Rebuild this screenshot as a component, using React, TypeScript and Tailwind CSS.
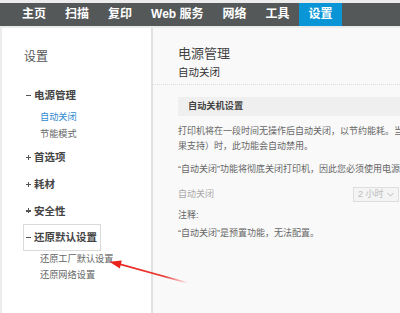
import React from 'react';

const navItems = ['主页', '扫描', '复印', 'Web 服务', '网络', '工具', '设置'];

const groups = [
  { label: '电源管理', open: true, subs: ['自动关闭', '节能模式'] },
  { label: '首选项', open: false, subs: [] },
  { label: '耗材', open: false, subs: [] },
  { label: '安全性', open: false, subs: [] },
  { label: '还原默认设置', open: true, focused: true, subs: ['还原工厂默认设置', '还原网络设置'] },
];

const Sign = ({ open }: { open: boolean }) => (
  <span className="relative inline-block w-[9px] h-[10px]">
    <span className="absolute left-[1px] top-[4.5px] w-[5px] h-[1.3px] bg-[#555]" />
    {!open && <span className="absolute left-[3px] top-[2.5px] w-[1.3px] h-[5px] bg-[#555]" />}
  </span>
);

const App = () => {
  return (
    <div className="relative w-[400px] h-[313px] overflow-hidden bg-[#ececec] font-['Liberation_Sans','Noto_Sans_CJK_SC',sans-serif]">
      <div className="w-[560px]">
        {/* top nav */}
        <div className="mt-[3px] h-[23px] bg-[#545859] flex pl-[12.5px]">
          {navItems.map((item) => (
            <div
              key={item}
              className={`px-[9.5px] h-[23px] leading-[23px] text-[12px] font-bold text-white whitespace-nowrap ${item === '设置' ? 'bg-[#0a96d6]' : ''}`}
            >
              {item}
            </div>
          ))}
        </div>

        <div className="flex h-[287px] pt-[2px]">
          {/* left menu */}
          <div className="ml-[2px] w-[151px] bg-white border-r-[2px] border-[#e1e1e1] pl-[21px] pt-[19.7px]">
            <div className="h-[18px] leading-[18px] text-[12px] text-[#555] pl-[1px]">设置</div>
            <div className="mt-[16.6px]">
              {groups.map((g) => (
                <div key={g.label} className={g.open ? 'mb-[2px]' : ''}>
                  <div
                    className={`inline-flex items-center h-[26.67px] pl-[1px] pr-[2.5px] border ${g.focused ? 'border-[#dadada]' : 'border-transparent'}`}
                  >
                    <Sign open={g.open} />
                    <span className="text-[10.5px] font-bold text-[#444] leading-none">{g.label}</span>
                  </div>
                  {g.subs.map((s, i) => (
                    <div
                      key={s}
                      className={`h-[16.6px] leading-[16.6px] pl-[17px] text-[9.2px] whitespace-nowrap ${g.label === '电源管理' && i === 0 ? 'text-[#2f8bcf]' : 'text-[#666]'}`}
                    >
                      {s}
                    </div>
                  ))}
                </div>
              ))}
            </div>
          </div>

          {/* right content */}
          <div className="flex-1 bg-[#f9f9f9]">
            <div className="pl-[25px] pt-[17px] h-[57px] border-b border-dotted border-[#dcdcdc]">
              <div className="h-[18px] leading-[18px] text-[13px] text-[#444]">电源管理</div>
              <div className="h-[14px] leading-[14px] mt-[1.5px] text-[10.5px] text-[#333]">自动关闭</div>
            </div>
            <div className="pl-[25px] pt-[12px]">
              <div className="h-[19px] bg-[#efefef] pl-[10px] leading-[19px] text-[9.2px] font-bold text-[#444]">
                自动关机设置
              </div>
              <div className="mt-[8px] text-[9px] text-[#666] leading-[15px] whitespace-nowrap">
                <div>打印机将在一段时间无操作后自动关闭，以节约能耗。当网络端口处于活动状态（如</div>
                <div>果支持）时，此功能会自动禁用。</div>
              </div>
              <div className="mt-[8px] text-[9px] text-[#666] leading-[15px] whitespace-nowrap">
                “自动关闭”功能将彻底关闭打印机，因此您必须使用电源按钮才能将其重新打开。
              </div>
              <div className="mt-[9px] flex items-center h-[17px]">
                <div className="w-[175px] text-[9px] text-[#aaa]">自动关闭</div>
                <div className="flex items-center gap-[3px] h-[15px] px-[4px] border border-[#dedede] bg-[#f4f4f4] text-[9px] text-[#bbb]">
                  <span>2 小时</span>
                  <svg width="7" height="5" viewBox="0 0 7 5" fill="none">
                    <path d="M0.5 1l3 3 3-3" stroke="#bbb" strokeWidth="1" />
                  </svg>
                </div>
              </div>
              <div className="mt-[4px] text-[9px] text-[#666] leading-[17px]">注释:</div>
              <div className="mt-[2px] text-[9px] text-[#666] leading-[15px] whitespace-nowrap">
                “自动关闭”是预置功能，无法配置。
              </div>
            </div>
          </div>
        </div>
      </div>

      {/* red annotation arrow */}
      <svg className="absolute left-0 top-0 pointer-events-none" width="400" height="313" viewBox="0 0 400 313">
        <defs>
          <linearGradient id="arrowFade" x1="110" y1="262" x2="188" y2="283" gradientUnits="userSpaceOnUse">
            <stop offset="0" stopColor="#e8241c" stopOpacity="1" />
            <stop offset="0.7" stopColor="#e8241c" stopOpacity="0.9" />
            <stop offset="1" stopColor="#e8241c" stopOpacity="0" />
          </linearGradient>
        </defs>
        <path d="M116 263.2 L188 283" stroke="url(#arrowFade)" strokeWidth="1.8" strokeLinecap="round" />
        <polygon points="109.5,261.8 121.8,260.6 119.8,268.4" fill="#e8241c" />
      </svg>
    </div>
  );
};

export default App;
